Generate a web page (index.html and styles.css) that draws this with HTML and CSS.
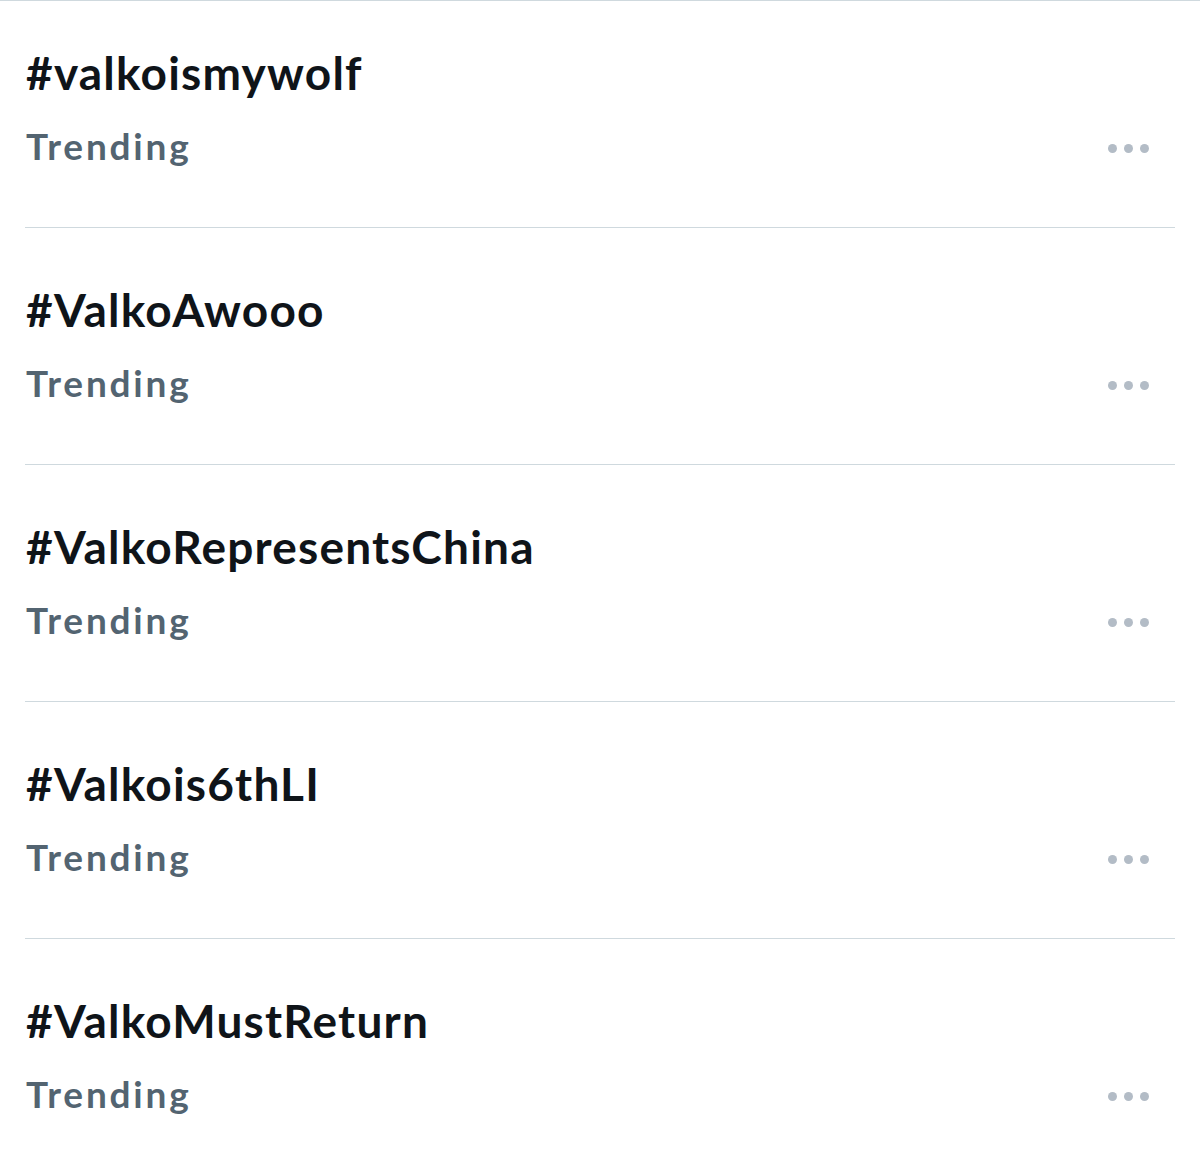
FILE: index.html
```html
<!DOCTYPE html>
<html lang="en">
<head>
<meta charset="utf-8">
<title>Trends</title>
<link rel="stylesheet" href="styles.css">
</head>
<body>
<main class="list">
  <section class="trend trend-first">
    <div class="tag">#valkoismywolf</div>
    <div class="meta"><span class="label">Trending</span><span class="more"><i></i><i></i><i></i></span></div>
  </section>
  <section class="trend">
    <div class="tag">#ValkoAwooo</div>
    <div class="meta"><span class="label">Trending</span><span class="more"><i></i><i></i><i></i></span></div>
  </section>
  <section class="trend">
    <div class="tag">#ValkoRepresentsChina</div>
    <div class="meta"><span class="label">Trending</span><span class="more"><i></i><i></i><i></i></span></div>
  </section>
  <section class="trend">
    <div class="tag">#Valkois6thLI</div>
    <div class="meta"><span class="label">Trending</span><span class="more"><i></i><i></i><i></i></span></div>
  </section>
  <section class="trend trend-last">
    <div class="tag">#ValkoMustReturn</div>
    <div class="meta"><span class="label">Trending</span><span class="more"><i></i><i></i><i></i></span></div>
  </section>
</main>
</body>
</html>
```
FILE: styles.css
```css
html, body {
  margin: 0;
  padding: 0;
  background: #ffffff;
}
body {
  font-family: Lato, "Liberation Sans", sans-serif;
  height: 1150px;
  overflow: hidden;
}
.list {
  border-top: 1px solid #cfd9de;
  display: flex;
  flex-direction: column;
}
.trend {
  margin: 0 25px;
  padding: 55px 0 59px 0;
  border-bottom: 1px solid #cfd9de;
  display: flex;
  flex-direction: column;
}
.trend-first {
  padding-top: 45px;
}
.trend-last {
  border-bottom: none;
}
.tag {
  font-size: 46px;
  line-height: 54px;
  font-weight: 700;
  letter-spacing: 1.2px;
  color: #0f1419;
  padding-left: 1px;
}
.meta {
  margin-top: 24px;
  display: flex;
  justify-content: space-between;
  align-items: center;
}
.label {
  font-size: 37px;
  line-height: 44px;
  font-weight: 700;
  letter-spacing: 2.8px;
  color: #536471;
  padding-left: 1px;
}
.more {
  display: flex;
  gap: 7px;
  margin-right: 26px;
  margin-top: 5px;
}
.more i {
  display: block;
  width: 9px;
  height: 9px;
  border-radius: 50%;
  background: #b3bcc6;
}
```
